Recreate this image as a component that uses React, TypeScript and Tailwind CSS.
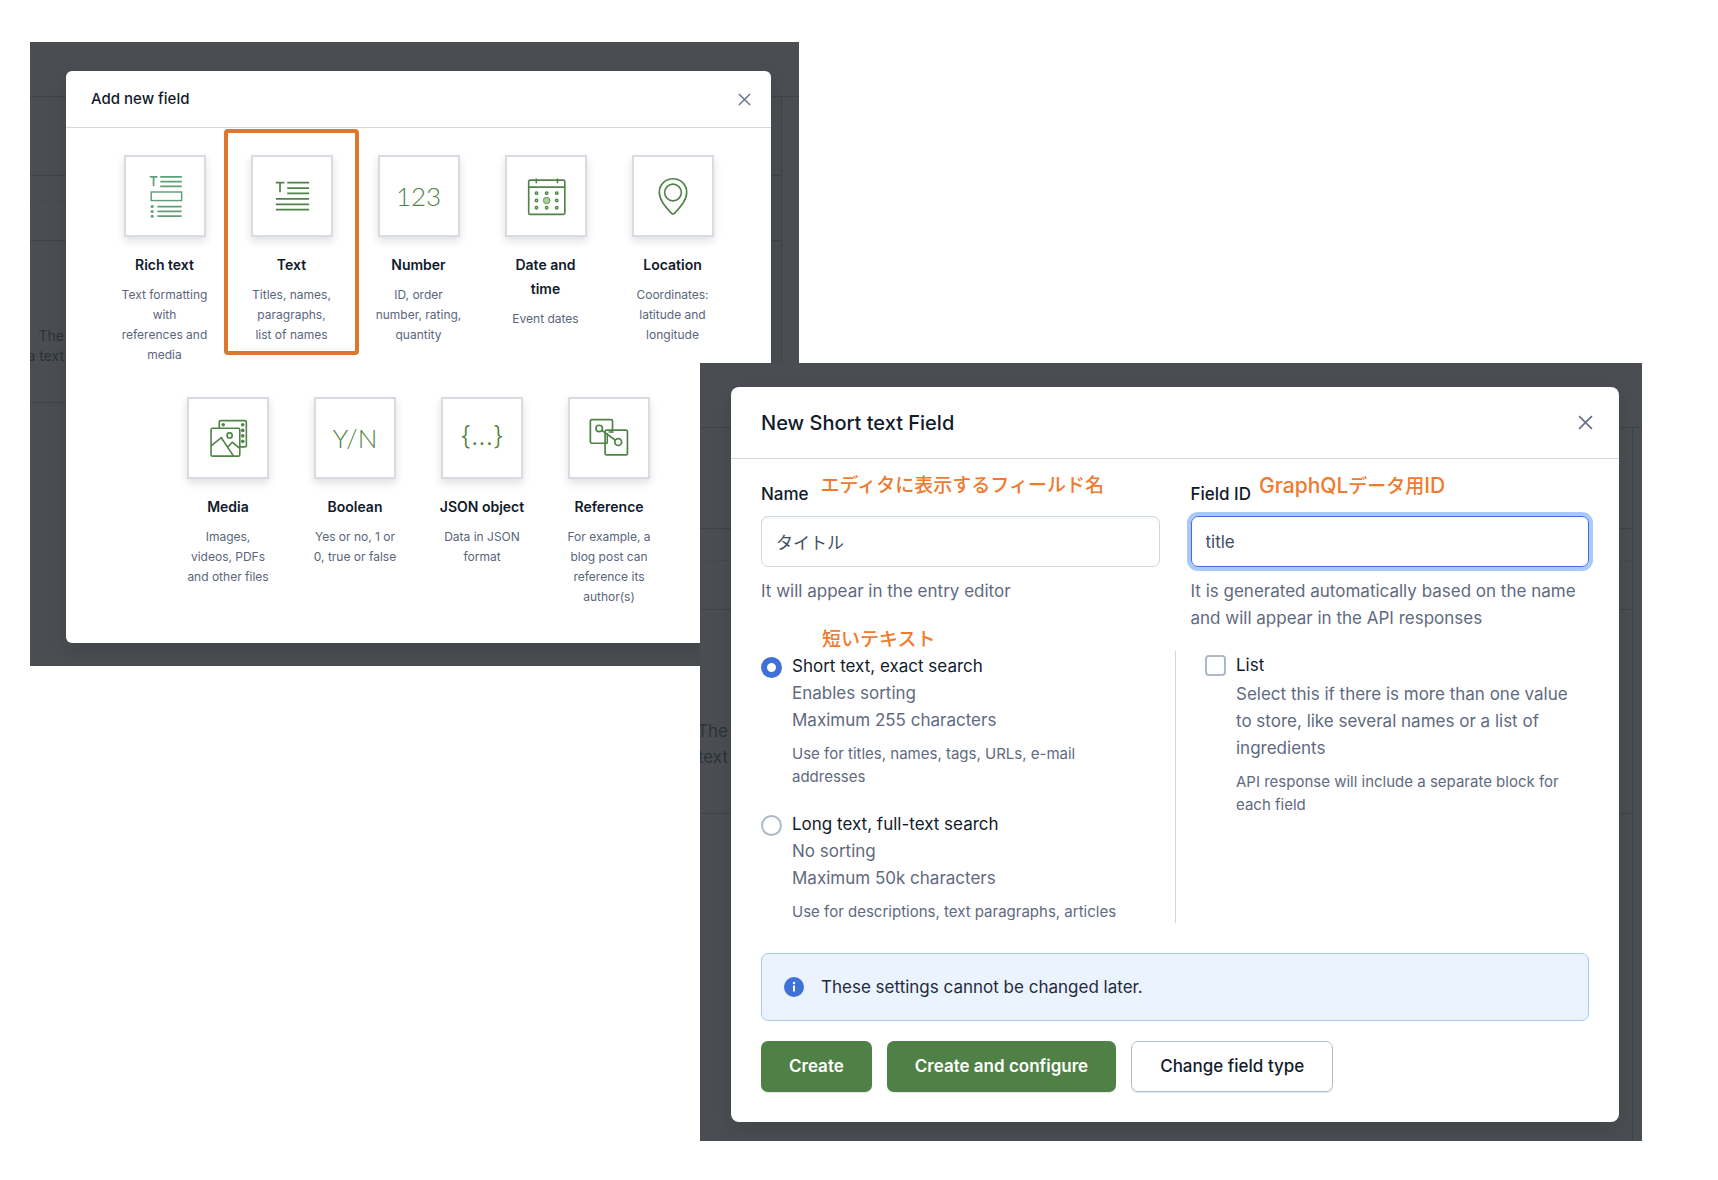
import type { ReactNode } from 'react';

const green = '#4f8446';

function RichTextIcon() {
  return (
    <svg viewBox="0 0 82 82" className="size-full" fill="none" stroke="#5f9e78" strokeWidth="1.8" aria-hidden="true">
      <path d="M25 20.8h8M29 20.8v10M36 20.8h22.7M36 25.8h22.7M36 30.8h22.7" />
      <rect x="26.5" y="36.8" width="32" height="9" strokeWidth="1.5" />
      <path d="M33 52.2h25.5M33 57.2h25.5M33 62.2h25.5" />
      <g fill="#5f9e78" stroke="none">
        <circle cx="27.5" cy="52" r="1.6" />
        <circle cx="27.5" cy="57.2" r="1.6" />
        <circle cx="27.5" cy="62.2" r="1.6" />
      </g>
    </svg>
  );
}

function TextIcon() {
  return (
    <svg viewBox="0 0 82 82" className="size-full" fill="none" stroke={green} strokeWidth="1.8" aria-hidden="true">
      <path d="M24 27h9M28.4 27v10M36 27h23M36 32.7h23M36 38.3h23M24 44h35M24 49.7h35M24 55.3h35" />
    </svg>
  );
}

function CalendarIcon() {
  return (
    <svg viewBox="0 0 82 82" className="size-full" fill="none" stroke={green} strokeWidth="1.7" aria-hidden="true">
      <rect x="22.8" y="24.3" width="38" height="36" rx="1.5" />
      <path d="M22.8 31.7h38M30.8 22.5v5M53 22.5v5" />
      <g strokeWidth="1.3" fill="#a9cf96">
        <circle cx="31" cy="38" r="1.4" />
        <circle cx="41.7" cy="38" r="1.4" />
        <circle cx="52.3" cy="38" r="1.4" />
        <circle cx="31" cy="45.7" r="1.4" />
        <circle cx="52.3" cy="45.7" r="1.4" />
        <circle cx="31" cy="53.3" r="1.4" />
        <circle cx="41.7" cy="53.3" r="1.4" />
        <circle cx="52.3" cy="53.3" r="1.4" />
        <circle cx="41.7" cy="45.7" r="3.5" strokeWidth="0.8" />
      </g>
    </svg>
  );
}

function LocationIcon() {
  return (
    <svg viewBox="0 0 82 82" className="size-full" fill="none" stroke={green} strokeWidth="1.7" aria-hidden="true">
      <path d="M41 22.8c-8 0-14.4 6.3-14.4 14.2 0 7.8 5.6 14.5 12.6 22 1 1.1 2.6 1.1 3.6 0 7-7.5 12.6-14.2 12.6-22 0-7.9-6.4-14.2-14.4-14.2z" />
      <circle cx="41" cy="37.3" r="8.8" />
    </svg>
  );
}

function MediaIcon() {
  return (
    <svg viewBox="0 0 82 82" className="size-full" fill="none" stroke={green} strokeWidth="1.7" aria-hidden="true">
      <path d="M31.8 30.5v-6.3q0-1.5 1.5-1.5h25.5q1.5 0 1.5 1.5v24.6q0 1.5-1.5 1.5h-5.5" />
      <rect x="23.2" y="30.7" width="30.2" height="29.3" rx="1.5" />
      <circle cx="42.7" cy="38.3" r="2.7" />
      <path d="M23.2 49.3l10.8-8.6 12.8 19.3M40.3 50.8l5.3-5.3 7.8 6.3" />
      <g fill={green} stroke="none">
        <circle cx="36" cy="27" r="1.9" />
        <circle cx="56.5" cy="27" r="1.9" />
        <circle cx="56.5" cy="33" r="1.9" />
        <circle cx="56.5" cy="38.8" r="1.9" />
        <circle cx="56.5" cy="44.5" r="1.9" />
      </g>
    </svg>
  );
}

function ReferenceIcon() {
  return (
    <svg viewBox="0 0 82 82" className="size-full" fill="none" stroke={green} strokeWidth="1.8" aria-hidden="true">
      <path d="M39.5 46.500h-16.600q-1.500 0-1.500-1.500v-21.800q0-1.500 1.500-1.500h20.300q1.500 0 1.500 1.500v12.500" />
      <path d="M39.200 46.500v-10.500M40.500 34.800h4.500" strokeWidth="1.6" />
      <rect x="36.9" y="32.7" width="23.5" height="26" rx="1.5" />
      <circle cx="30.7" cy="31" r="3.4" />
      <circle cx="50.7" cy="45.3" r="3.6" />
      <path d="M33.5 33l14.3 10.3" />
    </svg>
  );
}

function GlyphIcon({ children }: { children: ReactNode }) {
  return <span className="font-[Lato,sans-serif] text-[26px] leading-none font-light text-[#4f8446]">{children}</span>;
}

function BracesIcon() {
  return <span className="pb-1 text-[26px] leading-none font-light text-[#4f8446]">{'{...}'}</span>;
}

function CloseIcon({ size }: { size: number }) {
  return (
    <svg width={size} height={size} viewBox="0 0 14 14" fill="none" stroke="#67728a" strokeWidth="1.6" aria-hidden="true">
      <path d="M1 1l12 12M13 1L1 13" />
    </svg>
  );
}

type FieldType = { name: string; description: string; icon: ReactNode; highlighted?: boolean };

const firstRow: FieldType[] = [
  { name: 'Rich text', description: 'Text formatting with references and media', icon: <RichTextIcon /> },
  { name: 'Text', description: 'Titles, names, paragraphs, list of names', icon: <TextIcon />, highlighted: true },
  { name: 'Number', description: 'ID, order number, rating, quantity', icon: <GlyphIcon>123</GlyphIcon> },
  { name: 'Date and time', description: 'Event dates', icon: <CalendarIcon /> },
  { name: 'Location', description: 'Coordinates: latitude and longitude', icon: <LocationIcon /> },
];

const secondRow: FieldType[] = [
  { name: 'Media', description: 'Images, videos, PDFs and other files', icon: <MediaIcon /> },
  { name: 'Boolean', description: 'Yes or no, 1 or 0, true or false', icon: <GlyphIcon>Y/N</GlyphIcon> },
  { name: 'JSON object', description: 'Data in JSON format', icon: <BracesIcon /> },
  { name: 'Reference', description: 'For example, a blog post can reference its author(s)', icon: <ReferenceIcon /> },
];

function FieldCard({ name, description, icon, highlighted }: FieldType) {
  return (
    <button type="button" className="relative flex w-[87px] flex-col items-center text-center">
      <span className="flex size-[82px] items-center justify-center border-2 border-[#d8dce2] shadow-[0_4px_8px_rgba(25,37,50,0.14)]">
        {icon}
      </span>
      <span className="mt-4 text-sm leading-6 font-semibold text-[#111b2b]">{name}</span>
      <span className="mt-2 text-xs leading-5 text-[#5a657c]">{description}</span>
      {highlighted && (
        <span className="pointer-events-none absolute -inset-x-6 -top-[26px] -bottom-[10px] rounded-sm border-4 border-[#e0762c]" />
      )}
    </button>
  );
}

function FieldRow({ fields }: { fields: FieldType[] }) {
  return (
    <div className="flex items-start justify-center gap-10">
      {fields.map((field) => (
        <FieldCard key={field.name} {...field} />
      ))}
    </div>
  );
}

function DimmedPage({ large }: { large?: boolean }) {
  const word = large ? 'flex w-7 justify-end whitespace-nowrap' : 'flex w-[34px] justify-end whitespace-nowrap';
  return (
    <div className="absolute inset-0 flex flex-col overflow-hidden text-[#2d3237]" aria-hidden="true">
      <div className={large ? 'h-16 shrink-0' : 'h-[54px] shrink-0'} />
      <div className="border-t border-[#3e4347]" />
      <div
        className={
          large
            ? 'mr-[9px] flex flex-1 flex-col border-r border-[#3e4347]'
            : 'mr-[17px] flex flex-1 flex-col border-r border-[#3e4347]'
        }
      >
        <div className={large ? 'h-[101px] border-b border-[#3e4347]' : 'h-[79px] border-b border-[#3e4347]'} />
        <div className={large ? 'h-8 border-b border-dashed border-[#43484c]' : 'h-[26px] border-b border-dashed border-[#43484c]'} />
        <div className={large ? 'h-[49px] border-b border-[#3e4347]' : 'h-[39px] border-b border-[#3e4347]'} />
        <div
          className={
            large
              ? 'h-[204px] border-b border-[#3e4347] pt-[108px] text-[17px] leading-[26px]'
              : 'h-[162px] border-b border-[#3e4347] pt-[85px] text-sm leading-5'
          }
        >
          <p className={word}>The</p>
          <p className={word}>{large ? 'text' : 'a text'}</p>
        </div>
      </div>
    </div>
  );
}

function Annotation({ children }: { children: ReactNode }) {
  return <span className="text-[19px] leading-6 font-medium whitespace-nowrap text-[#f07a2d]">{children}</span>;
}

type TextChoiceProps = { id: string; title: string; lines: string[]; hint: string; checked?: boolean };

function TextChoice({ id, title, lines, hint, checked }: TextChoiceProps) {
  return (
    <div className="flex items-start gap-[10px]">
      <input
        id={id}
        type="radio"
        name="text-kind"
        defaultChecked={checked}
        className="mt-[5px] size-[21px] shrink-0 appearance-none rounded-full border-2 border-[#aeb9c7] bg-white checked:border-[6px] checked:border-[#4071d8]"
      />
      <label htmlFor={id} className="block pt-px text-[17px] leading-[27px] text-[#5f6a80]">
        <span className="block text-[#111b2b]">{title}</span>
        {lines.map((line) => (
          <span key={line} className="block">
            {line}
          </span>
        ))}
        <span className="mt-2 block text-[15px] leading-[23px]">{hint}</span>
      </label>
    </div>
  );
}

const buttonBase = 'h-[51px] rounded-[7px] px-7 text-[17px] shadow-[0_1px_1px_rgba(25,37,50,0.12)]';

export default function App() {
  return (
    <main className="grid min-h-screen grid-cols-[670fr_99fr_843fr] content-start bg-white pt-[42px] pr-[76px] pb-[38px] pl-[30px] font-[Inter,'Noto_Sans_CJK_JP',sans-serif]">
      <section className="relative col-span-2 row-start-1 overflow-hidden bg-[#4a4e52] pt-[29px] pr-7 pb-[23px] pl-9">
        <DimmedPage />
        <div className="relative rounded-md bg-white shadow-[0_8px_20px_rgba(0,0,0,0.12)]">
          <header className="flex h-[57px] items-center justify-between border-b border-[#cfd6dd] pr-[20px] pl-[25px]">
            <h2 className="text-[15px] font-medium text-[#111b2b]">Add new field</h2>
            <button type="button" aria-label="Close">
              <CloseIcon size={13} />
            </button>
          </header>
          <div className="flex flex-col gap-8 px-4 pt-[27px] pb-9">
            <FieldRow fields={firstRow} />
            <FieldRow fields={secondRow} />
          </div>
        </div>
      </section>

      <section className="relative col-span-2 col-start-2 row-start-2 -mt-[303px] overflow-hidden bg-[#4a4e52] pt-6 pr-[23px] pb-[19px] pl-[31px]">
        <DimmedPage large />
        <form
          className="relative rounded-lg bg-white shadow-[0_8px_20px_rgba(0,0,0,0.12)]"
          onSubmit={(event) => event.preventDefault()}
        >
          <header className="flex h-[72px] items-center justify-between border-b border-[#cfd6dd] pr-[26px] pl-[30px]">
            <h2 className="text-xl font-medium text-[#111b2b]">New Short text Field</h2>
            <button type="button" aria-label="Close">
              <CloseIcon size={15} />
            </button>
          </header>

          <div className="px-[30px] pt-[15px] pb-[30px]">
            <div className="grid grid-cols-2 gap-x-[31px]">
              <div>
                <div className="flex h-[42px] items-start gap-3">
                  <label htmlFor="field-name" className="pt-[7px] text-[17px] leading-[27px] font-medium text-[#111b2b]">
                    Name
                  </label>
                  <Annotation>エディタに表示するフィールド名</Annotation>
                </div>
                <input
                  id="field-name"
                  type="text"
                  defaultValue="タイトル"
                  className="block h-[51px] w-full rounded-[7px] border border-[#cfd6dd] px-[14px] text-[17px] text-[#414d63] shadow-[inset_0_2px_1px_rgba(225,228,232,0.3)] outline-none"
                />
                <p className="mt-[11px] text-[17px] leading-[27px] text-[#5f6a80]">It will appear in the entry editor</p>
              </div>
              <div>
                <div className="flex h-[42px] items-start gap-2">
                  <label htmlFor="field-id" className="pt-[7px] text-[17px] leading-[27px] font-medium text-[#111b2b]">
                    Field ID
                  </label>
                  <Annotation>
                    <span className="text-[21px]">GraphQL</span>データ用<span className="text-[21px]">ID</span>
                  </Annotation>
                </div>
                <input
                  id="field-id"
                  type="text"
                  defaultValue="title"
                  className="block h-[51px] w-full rounded-[7px] border border-[#3e6fdb] px-[14px] text-[17px] text-[#414d63] shadow-[0_0_0_4px_#a9caf8] outline-none"
                />
                <p className="mt-[11px] text-[17px] leading-[27px] text-[#5f6a80]">
                  It is generated automatically based on the name and will appear in the API responses
                </p>
              </div>
            </div>

            <div className="-mt-1 grid grid-cols-2">
              <div className="pr-10">
                <div className="ml-[61px] flex">
                  <Annotation>短いテキスト</Annotation>
                </div>
                <div className="flex flex-col gap-[22px]">
                  <TextChoice
                    id="short-text"
                    title="Short text, exact search"
                    lines={['Enables sorting', 'Maximum 255 characters']}
                    hint="Use for titles, names, tags, URLs, e-mail addresses"
                    checked
                  />
                  <TextChoice
                    id="long-text"
                    title="Long text, full-text search"
                    lines={['No sorting', 'Maximum 50k characters']}
                    hint="Use for descriptions, text paragraphs, articles"
                  />
                </div>
              </div>
              <div className="mt-[23px] flex items-start gap-[10px] border-l border-[#cfd6dd] pr-1 pl-[29px]">
                <input
                  id="list"
                  type="checkbox"
                  className="mt-1 size-[21px] shrink-0 appearance-none rounded-[4px] border-2 border-[#aeb9c7] bg-white checked:bg-[#4071d8]"
                />
                <label htmlFor="list" className="block pt-px text-[17px] leading-[27px] text-[#5f6a80]">
                  <span className="mb-0.5 block text-[#111b2b]">List</span>
                  <span className="block">
                    Select this if there is more than one value to store, like several names or a list of ingredients
                  </span>
                  <span className="mt-2 block text-[15px] leading-[23px]">
                    API response will include a separate block for each field
                  </span>
                </label>
              </div>
            </div>

            <div
              role="note"
              className="mt-[30px] flex h-[68px] items-center gap-[17px] rounded-[7px] border border-[#a9caf8] bg-[#ebf3fe] px-[22px]"
            >
              <svg width="20" height="20" viewBox="0 0 20 20" aria-hidden="true">
                <circle cx="10" cy="10" r="10" fill="#4071d8" />
                <circle cx="10" cy="6" r="1.2" fill="#fff" />
                <path d="M10 8.500v6" stroke="#fff" strokeWidth="2" />
              </svg>
              <p className="text-[17px] leading-[27px] text-[#1f2b3d]">These settings cannot be changed later.</p>
            </div>

            <div className="mt-5 flex gap-[15px]">
              <button type="submit" className={`${buttonBase} bg-[#4f8146] font-semibold text-white`}>
                Create
              </button>
              <button type="button" className={`${buttonBase} bg-[#4f8146] font-semibold text-white`}>
                Create and configure
              </button>
              <button type="button" className={`${buttonBase} border border-[#b4bfcc] bg-white font-medium text-[#111b2b]`}>
                Change field type
              </button>
            </div>
          </div>
        </form>
      </section>
    </main>
  );
}
